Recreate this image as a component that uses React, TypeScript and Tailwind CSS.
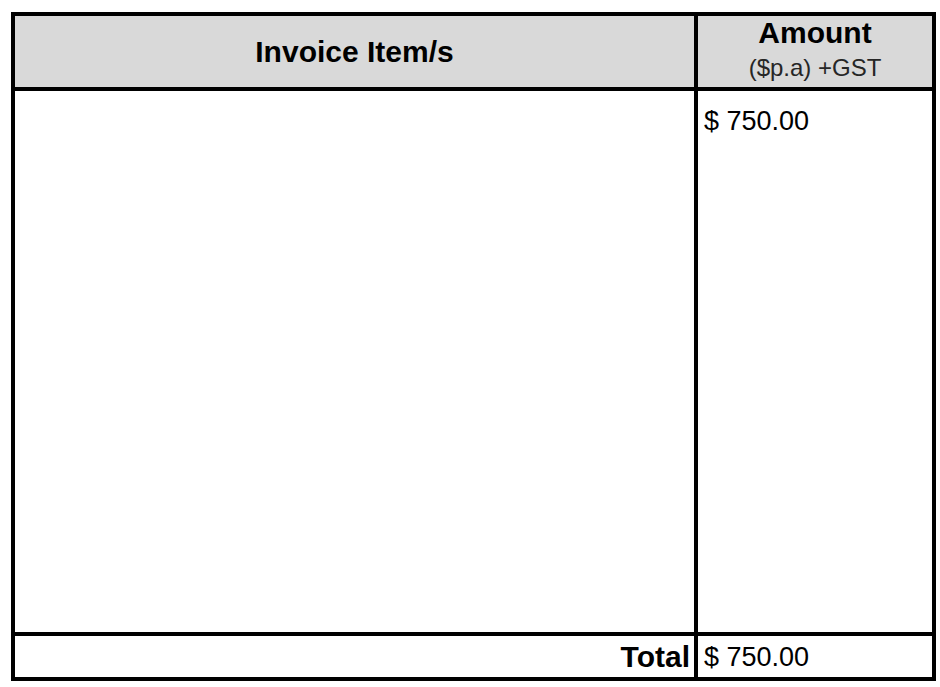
import { FC } from 'react';

const App: FC = () => {
  return (
    <div
      className="w-[940px] h-[687px] bg-white pt-[12px] pl-[11px]"
      style={{ fontFamily: '"Liberation Sans", Arial, sans-serif' }}
    >
      <div className="grid w-[925px] grid-cols-[679px_234px] grid-rows-[71px_541px_41px] gap-1 bg-black p-1 text-black">
        {/* header */}
        <div className="flex items-center justify-center bg-[#d9d9d9] text-[30px] font-bold leading-[32px]">
          Invoice Item/s
        </div>
        <div className="flex flex-col items-center bg-[#d9d9d9] pt-px">
          <span className="text-[30px] font-bold leading-[32px]">Amount</span>
          <span className="mt-[5px] text-[24px] leading-[27px] text-[#262626]">($p.a) +GST</span>
        </div>

        {/* body */}
        <div className="bg-white" />
        <div className="bg-white pl-[6px] pt-[15px] text-[27px] leading-[30px]">$ 750.00</div>

        {/* total */}
        <div className="flex items-center justify-end bg-white pr-[4px] text-[30px] font-bold leading-[32px]">
          Total
        </div>
        <div className="flex items-center bg-white pl-[6px] text-[27px] leading-[30px]">$ 750.00</div>
      </div>
    </div>
  );
};

export default App;
